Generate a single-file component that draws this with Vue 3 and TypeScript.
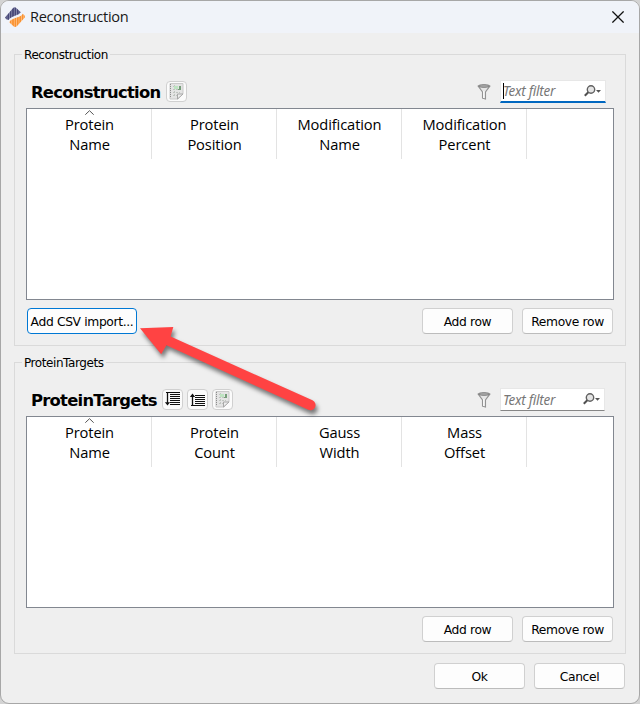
<script setup lang="ts">
interface Column { first: string; second: string }
interface Section {
  name: string
  columns: Column[]
  sortTools: boolean
  csvImport: boolean
  focused: boolean
}

const sections: Section[] = [
  {
    name: 'Reconstruction',
    columns: [
      { first: 'Protein', second: 'Name' },
      { first: 'Protein', second: 'Position' },
      { first: 'Modification', second: 'Name' },
      { first: 'Modification', second: 'Percent' },
    ],
    sortTools: false,
    csvImport: true,
    focused: true,
  },
  {
    name: 'ProteinTargets',
    columns: [
      { first: 'Protein', second: 'Name' },
      { first: 'Protein', second: 'Count' },
      { first: 'Gauss', second: 'Width' },
      { first: 'Mass', second: 'Offset' },
    ],
    sortTools: true,
    csvImport: false,
    focused: false,
  },
]
</script>

<template>
  <div class="desktop">
    <div class="dialog">
      <header class="titlebar">
        <svg class="logo" width="20" height="20" viewBox="0 0 20 20">
          <defs>
            <pattern id="navyStripes" width="2.4" height="20" patternUnits="userSpaceOnUse">
              <rect width="2.4" height="20" fill="#8b8eb0" /><rect width="1.6" height="20" fill="#454676" />
            </pattern>
            <pattern id="orangeStripes" width="2.4" height="20" patternUnits="userSpaceOnUse">
              <rect width="2.4" height="20" fill="#ffc085" /><rect width="1.6" height="20" fill="#f9912f" />
            </pattern>
          </defs>
          <path d="M0 10.5 7.8 1.2Q9.7-.6 11.6 1.2L15.8 5.3Q14.5 7.4 10 8.8 5 10.6 3.6 13 .6 12.6 0 10.5Z" fill="url(#navyStripes)" />
          <path d="M4.2 15.2Q5.6 12.4 11 10.8 16.6 9.2 17.8 6.8 20.6 8.6 19.8 10.6L12.1 19Q10.2 20.8 8.2 19Z" fill="url(#orangeStripes)" />
        </svg>
        <span class="window-title">Reconstruction</span>
        <svg class="close" width="12" height="12" viewBox="0 0 12 12"><path d="M.4.4 11.6 11.6M11.6.4.4 11.6" fill="none" stroke="#111" stroke-width="1.25" /></svg>
      </header>

      <main class="body">
        <section v-for="s in sections" :key="s.name" class="group">
          <span class="legend">{{ s.name }}</span>
          <div class="toolbar">
            <h2 :class="{ targets: s.sortTools }">{{ s.name }}</h2>
            <template v-if="s.sortTools">
              <button class="tool">
                <svg width="19" height="19" viewBox="0 0 19 19" fill="none" stroke="#111">
                  <path d="M3 2.5h14M7 4.5h10M7 6.5h10M7 8.5h10M7 10.5h10M7 12.5h10M7 14.5h10" /><path d="M4.5 3v11" stroke-width="1.3" /><path d="M1.9 12.2h5.2L4.5 15.5Z" fill="#111" stroke="none" />
                </svg>
              </button>
              <button class="tool">
                <svg width="19" height="19" viewBox="0 0 19 19" fill="none" stroke="#111">
                  <path d="M7 5.5h10M7 7.5h10M7 9.5h10M7 11.5h10M7 13.5h10M3 15.5h14" /><path d="M4.5 5v11" stroke-width="1.3" /><path d="M1.9 7h5.2L4.5 3.5Z" fill="#111" stroke="none" />
                </svg>
              </button>
            </template>
            <button class="tool">
              <svg width="19" height="19" viewBox="0 0 19 19">
                <path d="M3 1.5h13v10l-5 5.5H3Z" fill="#e4e4e4" stroke="#cacaca" />
                <path d="M3.5 2v14" stroke="#8d8d8d" stroke-dasharray="1 1" />
                <path d="M6 4.5h9M6 7.5h9M6 10.5h7M6 13.5h5M7.5 3v12" stroke="#c0c5c0" stroke-dasharray="2 1" fill="none" />
                <path d="M7 4h4v3H7Z" fill="#bde4c1" /><path d="M11 7h1V4h2v4h-3Z" fill="#759d79" />
                <path d="M10.5 17v-5h5.5Z" fill="#eee" stroke="#a8a8a8" />
              </svg>
            </button>
            <span class="spacer"></span>
            <svg class="funnel" width="14" height="16" viewBox="0 0 14 16">
              <path d="M1.2 2.2 5.5 8v6.2L8.5 15V8l4.3-5.8Z" fill="#e6e6e6" stroke="#929292" stroke-width="1.1" />
              <ellipse cx="7" cy="2" rx="5.7" ry="1.3" fill="#aaa" stroke="#808080" />
              <path d="M6.8 7v7" stroke="#fff" />
            </svg>
            <div class="filter" :class="{ focused: s.focused }">
              <span class="caret"></span>
              <span class="placeholder">Text filter</span>
              <svg width="18" height="13" viewBox="0 0 18 13">
                <circle cx="7" cy="4.5" r="3.7" fill="#e4e4e4" stroke="#606060" stroke-width="1.4" />
                <path d="M4.3 7.2.8 10.8" stroke="#505050" stroke-width="2" /><path d="M12 5h5l-2.5 2.8Z" fill="#555" />
              </svg>
            </div>
          </div>

          <div class="table">
            <div v-for="(c, i) in s.columns" :key="i" class="column">
              <svg v-if="i === 0" class="sort" width="9" height="5" viewBox="0 0 9 5"><path d="M.3 4.7 4.5.7 8.7 4.7" fill="none" stroke="#555" /></svg>
              <span>{{ c.first }}</span><span>{{ c.second }}</span>
            </div>
          </div>

          <div class="actions">
            <button v-if="s.csvImport" class="push csv">Add CSV import...</button>
            <span class="spacer"></span>
            <button class="push">Add row</button>
            <button class="push">Remove row</button>
          </div>
        </section>
        <footer class="footer">
          <button class="push">Ok</button>
          <button class="push">Cancel</button>
        </footer>
      </main>
    </div>

    <svg class="pointer" width="220" height="110" viewBox="120 315 220 110">
      <path d="M140 328.3 173.3 327 170.6 336.6 312.5 400.3A5.2 5.2 0 0 1 308.2 409.8L166.4 345.2 161.2 354.2Z" fill="#ff4343" />
    </svg>
  </div>
</template>

<style>
body { margin: 0; background: #c8c8c8; overflow: hidden; }
</style>

<style scoped>
* { box-sizing: border-box; }
.desktop { position: relative; width: 640px; height: 704px; background: #d3d3d3; }
.dialog { width: 640px; height: 704px; border: 1px solid #a7a7a7; border-radius: 9px; background: #efefef; overflow: hidden; font: 12.5px "DejaVu Sans", sans-serif; color: #000; }
.titlebar { height: 32px; background: #f0f3f9; display: flex; align-items: center; padding: 0 15px 0 4px; }
.logo { flex: none; margin-top: -1px; }
.window-title { flex: 1; margin: -2px 0 0 5px; font: 14.6px/20px "Open Sans", sans-serif; letter-spacing: -.3px; color: #191919; }
.close { flex: none; }
.body { padding: 21px 13px 0; }
.group { height: 292px; border: 1px solid #dadada; padding: 0 11px; margin-bottom: 16px; }
.legend { display: block; width: max-content; height: 16px; margin: -8px 0 0 -4px; padding: 0 2px; background: #efefef; font: 12px/17px "DejaVu Sans", sans-serif; letter-spacing: -.42px; white-space: nowrap; }
.toolbar { display: flex; height: 45px; align-items: flex-start; padding: 17px 8px 0 5px; }
h2 { margin: 0 6px 0 0; width: 129px; font: bold 16.4px/26px "DejaVu Sans", sans-serif; letter-spacing: -.75px; white-space: nowrap; }
h2.targets { width: 125px; }
.tool { width: 21px; height: 21px; margin: 1px 4px 0 0; padding: 0; border: 1px solid #d0d0d0; border-radius: 4px; background: #fbfbfb; flex: none; }
.tool svg { display: block; }
.spacer { flex: 1; }
.funnel { margin: 4px 9px 0 0; flex: none; }
.filter { position: relative; display: flex; align-items: center; width: 105px; height: 23px; margin-right: 1px; padding: 0 3px 0 2px; border: 1px solid #e7e7e7; border-bottom-color: #868686; background: #fff; flex: none; }
.filter.focused { width: 106px; margin-right: 0; border-bottom: 2px solid #0067c0; }
.caret { position: absolute; left: 2px; top: 2px; width: 1px; height: 16px; background: #000; display: none; }
.focused .caret { display: block; }
.placeholder { flex: 1; font: italic 13.5px "Noto Sans", "Open Sans", sans-serif; color: #777; letter-spacing: -.25px; white-space: nowrap; }
.table { width: 588px; height: 192px; border: 1px solid #828790; background: #fff; display: flex; }
.column { position: relative; width: 125px; height: 50px; padding: 5px 0 0 1px; border-right: 1px solid #e3e3e3; text-align: center; font: 14.7px/20px "Open Sans", sans-serif; letter-spacing: -.12px; }
.column span { display: block; }
.sort { position: absolute; left: 58px; top: 1px; }
.actions { display: flex; padding: 8px 1px 0; gap: 9px; }
.push { width: 91px; height: 26px; padding: 1px 0 0; border: 1px solid #d0d0d0; border-bottom-color: #bcbcbc; border-radius: 4px; background: #fdfdfd; font: 12.3px "DejaVu Sans", sans-serif; letter-spacing: -.35px; white-space: nowrap; color: #000; }
.push.csv { width: 110px; border-color: #0078d4; }
.footer { display: flex; justify-content: flex-end; gap: 9px; margin-top: -7px; padding-right: 1px; }
.pointer { position: absolute; left: 120px; top: 315px; filter: drop-shadow(2px 4px 2px rgba(0,0,0,.5)); }
</style>
